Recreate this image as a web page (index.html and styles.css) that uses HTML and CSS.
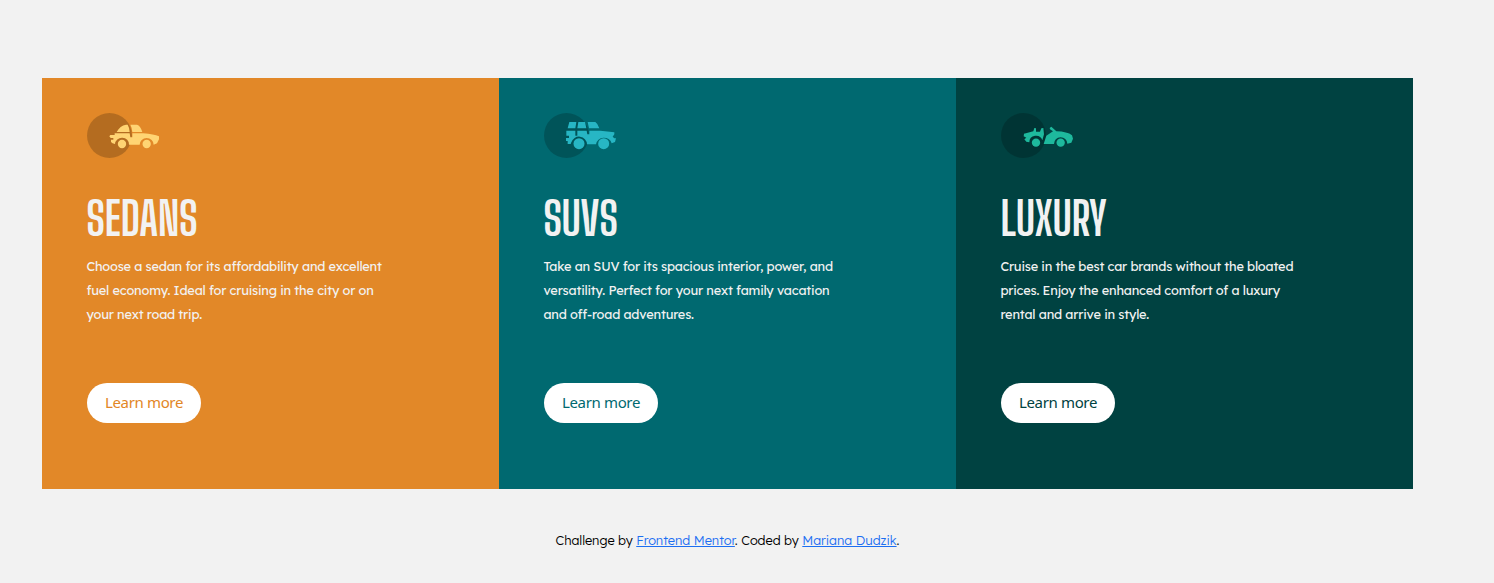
FILE: index.html
```html
<!DOCTYPE html>
<html lang="en">
<head>
<meta charset="utf-8">
<title>3-column preview card</title>
<link rel="stylesheet" href="styles.css">
</head>
<body>
<main class="cards">
  <section class="card sedans">
    <svg class="icon" viewBox="21 24 216 135">
      <circle class="disc" cx="88.500" cy="91.500" r="67.500"/>
      <path class="car" d="M110 81C117 68 126 60 138 59H143Q148 67 149 81ZM151 59H171Q181 61 187 81H157Q156 68 151 59ZM91 90H104V85H149L151 97H157V85H190Q222 88 237 94V103L231 115L221 119A21 20 0 0 0 179 119H147A21 20 0 0 0 105 117Q96 116 93 111V104H100V99H92L88 94Z"/>
      <circle class="car" cx="126" cy="117" r="12.500"/><circle class="car" cx="200" cy="117" r="12.500"/>
    </svg>
    <h1 class="title">SEDANS</h1>
    <p class="text">Choose a sedan for its affordability and excellent fuel economy. Ideal for cruising in the city or on your next road trip.</p>
    <a class="button">Learn more</a>
  </section>
  <section class="card suvs">
    <svg class="icon" viewBox="21 24 216 135">
      <circle class="disc" cx="88.500" cy="91.500" r="67.500"/>
      <path class="car" d="M97 51H118L115 70H92ZM124 51H144L148 70H121ZM152 51H175Q183 56 187 70H156ZM88 77H115V92H121V77H149L151 88H157V77H190L232 82V88L227 95L232 100H237L234 111L224 115A24 23 0 0 0 177 118H150A24 24 0 0 0 103 112L101 117H92V108H87V99H96V92H88Z"/>
      <circle class="car" cx="126" cy="116" r="16.500"/><circle class="car" cx="200" cy="116" r="16.500"/>
    </svg>
    <h1 class="title">SUVS</h1>
    <p class="text">Take an SUV for its spacious interior, power, and versatility. Perfect for your next family vacation and off-road adventures.</p>
    <a class="button">Learn more</a>
  </section>
  <section class="card luxury">
    <svg class="icon" viewBox="21 24 216 135">
      <circle class="disc" cx="88.500" cy="91.500" r="67.500"/>
      <path class="car" d="M90 86L118 79L121 69L126 70V80H138L142 70L148 69L150 88L145 106A20 20 0 0 0 106 112L97 110L91 103L97 98L89 94ZM167 69L172 65L187 79Q220 80 234 91L237 101L232 113L220 116A20 20 0 0 0 180 117H149L157 92L177 79L168 73Z"/>
      <circle class="car" cx="126" cy="113" r="12.500"/><circle class="car" cx="200" cy="113" r="12.500"/>
    </svg>
    <h1 class="title">LUXURY</h1>
    <p class="text">Cruise in the best car brands without the bloated prices. Enjoy the enhanced comfort of a luxury rental and arrive in style.</p>
    <a class="button">Learn more</a>
  </section>
</main>
<footer class="footer">Challenge by <a class="link">Frontend Mentor</a>. Coded by <a class="link">Mariana Dudzik</a>.</footer>
</body>
</html>
```

FILE: styles.css
```css
* { box-sizing: border-box; }
body { margin: 0; background: #f2f2f2; padding: 78px 81px 0 42px; font-family: "Lexend Deca", Lato, sans-serif; font-size: 12.8px; }
.cards { display: grid; grid-template-columns: repeat(3, 457px); }
.card { height: 411px; padding: 35px 45px 0; display: flex; flex-direction: column; align-items: flex-start; color: #f2f2f2; }
.sedans { background: #e28828; --car: #ffd473; --accent: #e28625; }
.suvs { background: #006970; --car: #27b6c4; --accent: #006970; }
.luxury { background: #004241; --car: #1eb99d; --accent: #004241; }
.icon { width: 72px; height: 45px; display: block; }
.disc { fill: #000; opacity: .2; }
.car { fill: var(--car); }
.title { margin: 27px 0 0 -.6px; height: 69px; font: 700 45px/69px "Big Shoulders Display", Roboto, sans-serif; }
.text { margin: 0 0 0 -.6px; width: 300px; font-weight: 400; line-height: 24px; height: 72px; letter-spacing: -.2px; }
.button { margin-top: 57px; padding-bottom: 2px; width: 114px; height: 40px; border-radius: 20px; background: #fff; color: var(--accent); display: flex; align-items: center; justify-content: center; font: 400 15px "Noto Sans", sans-serif; letter-spacing: -.35px; }
.footer { margin-top: 41px; text-align: center; line-height: 20px; color: #000; font-weight: 300; letter-spacing: -.04px; }
.link { color: #1c6ef2; text-decoration: underline; }
```
